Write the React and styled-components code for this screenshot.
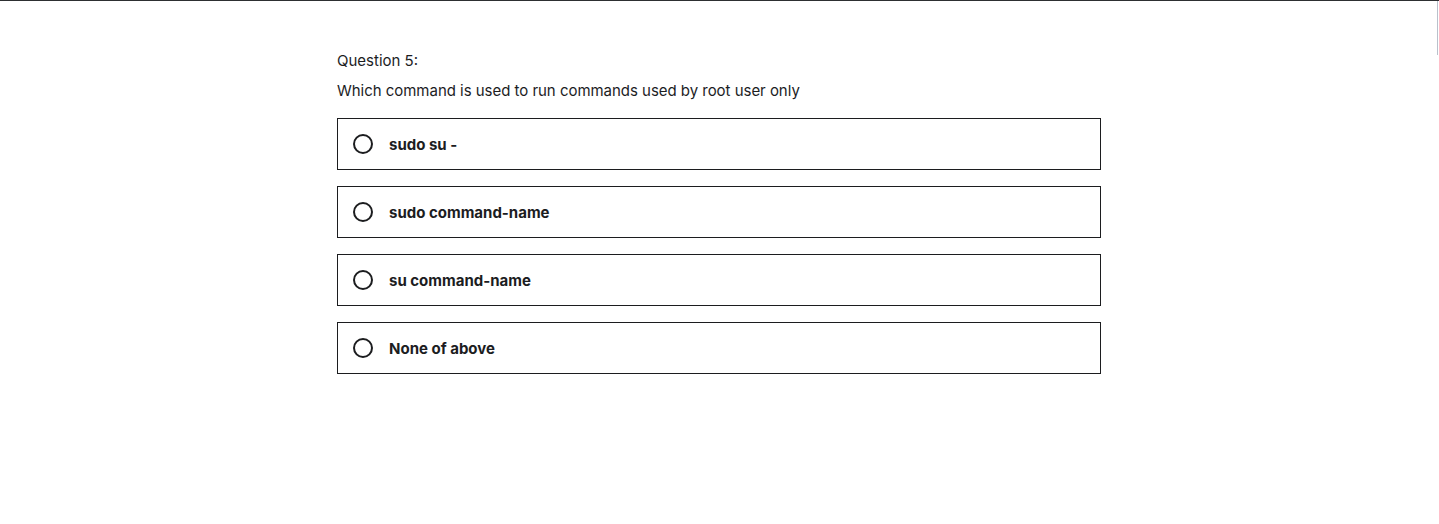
import styled, { createGlobalStyle } from "styled-components";

const GlobalStyle = createGlobalStyle`
    html, body {
        margin: 0;
        padding: 0;
        background: #fff;
    }

    body {
        font-family: Inter, "Noto Sans", Arial, sans-serif;
        color: #1c1d1f;
    }
`;

const options = [
    "sudo su -",
    "sudo command-name",
    "su command-name",
    "None of above",
];

export default function App() {
    return (
        <Page>
            <GlobalStyle />
            <ScrollMark />
            <Quiz>
                <Label>Question 5:</Label>
                <Prompt>Which command is used to run commands used by root user only</Prompt>
                <Options>
                    {options.map((text) => (
                        <Option key={text}>
                            <Radio />
                            <OptionText>{text}</OptionText>
                        </Option>
                    ))}
                </Options>
            </Quiz>
        </Page>
    );
}

const Page = styled.div`
    position: relative;
    min-height: 524px;
    border-top: 1px solid #2d2f31;
    padding-right: 1px;
    box-sizing: border-box;
`;

const ScrollMark = styled.div`
    position: absolute;
    top: 0;
    right: 1px;
    width: 1px;
    height: 54px;
    background: #b9c1cc;
`;

const Quiz = styled.div`
    width: 764px;
    margin: 0 auto;
    padding-top: 50px;
`;

const Label = styled.div`
    font-size: 15px;
    line-height: 20px;
`;

const Prompt = styled.div`
    font-size: 15px;
    line-height: 20px;
    margin-top: 10px;
    letter-spacing: -0.03px;
`;

const Options = styled.div`
    display: flex;
    flex-direction: column;
    gap: 16px;
    margin-top: 17px;
`;

const Option = styled.label`
    display: flex;
    align-items: center;
    gap: 16px;
    height: 52px;
    box-sizing: border-box;
    border: 1px solid #1c1d1f;
    padding: 0 15px;
    cursor: pointer;
`;

const Radio = styled.span`
    width: 20px;
    height: 20px;
    box-sizing: border-box;
    border: 2px solid #1c1d1f;
    border-radius: 50%;
    flex: none;
`;

const OptionText = styled.span`
    font-size: 15px;
    font-weight: 700;
`;
